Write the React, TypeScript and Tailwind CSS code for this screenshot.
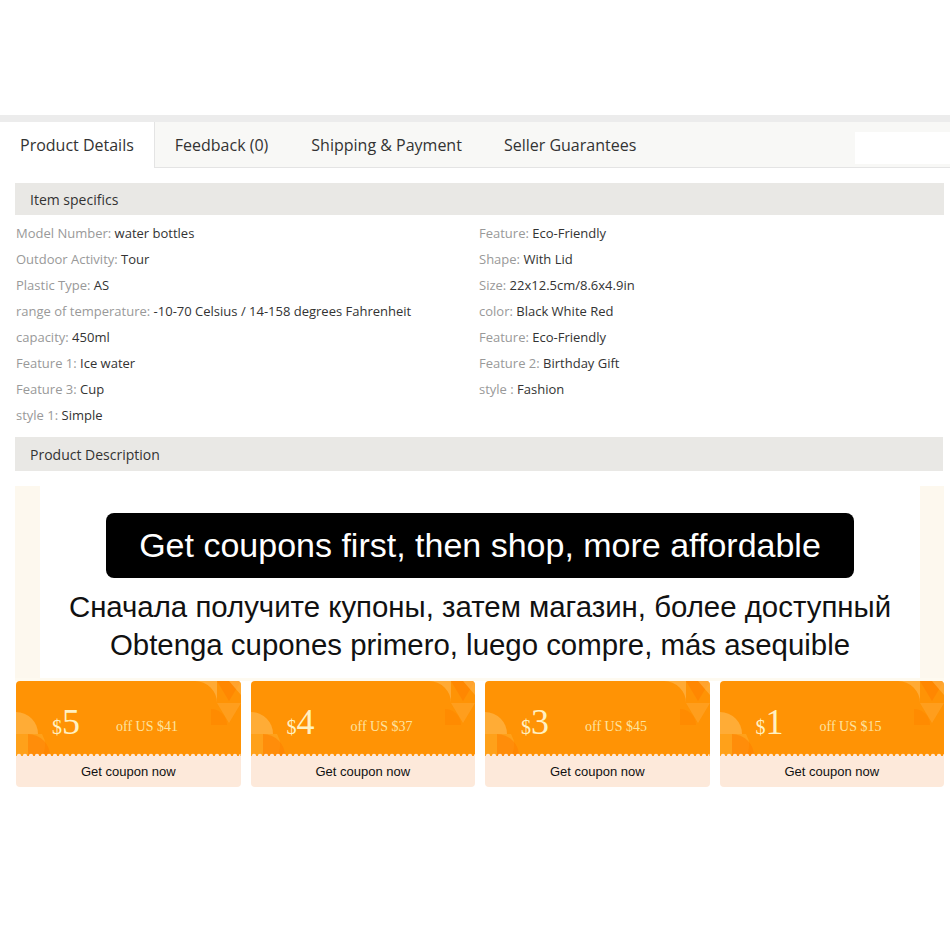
import React from "react";

const left: [string, string][] = [
  ["Model Number:", "water bottles"],
  ["Outdoor Activity:", "Tour"],
  ["Plastic Type:", "AS"],
  ["range of temperature:", "-10-70 Celsius / 14-158 degrees Fahrenheit"],
  ["capacity:", "450ml"],
  ["Feature 1:", "Ice water"],
  ["Feature 3:", "Cup"],
  ["style 1:", "Simple"],
];
const right: [string, string][] = [
  ["Feature:", "Eco-Friendly"],
  ["Shape:", "With Lid"],
  ["Size:", "22x12.5cm/8.6x4.9in"],
  ["color:", "Black White Red"],
  ["Feature:", "Eco-Friendly"],
  ["Feature 2:", "Birthday Gift"],
  ["style :", "Fashion"],
];

const coupons = [
  { v: "5", off: "$41" },
  { v: "4", off: "$37" },
  { v: "3", off: "$45" },
  { v: "1", off: "$15" },
];

function Row({ l, v }: { l: string; v: string }) {
  return (
    <div className="h-[26px] flex items-center whitespace-nowrap">
      <span className="text-[#999]">{l}</span>
      <span className="text-[#333]">&nbsp;{v}</span>
    </div>
  );
}

function Coupon({ v, off }: { v: string; off: string }) {
  return (
    <div className="flex-1 h-[106px] rounded-[4px] overflow-hidden flex flex-col">
      <div className="relative h-[75px] bg-[#ff9305] flex items-center">
        <svg className="absolute right-0 top-0" width="60" height="75" viewBox="0 0 60 75">
          <path d="M14 0 A22 22 0 0 1 36 22 L36 0 Z" fill="#ffb040" opacity="0.8" />
          <path d="M36 0 L60 0 L48 20 Z" fill="#ff8200" opacity="0.7" />
          <path d="M36 22 L60 22 L48 42 Z" fill="#ffa020" opacity="0.9" />
          <path d="M30 28 A16 16 0 0 1 46 44 L30 44 Z" fill="#ff8a00" opacity="0.8" />
          <path d="M48 0 L60 0 L60 14 Z" fill="#ffb54d" opacity="0.6" />
        </svg>
        <svg className="absolute left-0 bottom-0" width="40" height="44" viewBox="0 0 40 44">
          <path d="M0 0 A22 22 0 0 1 22 22 L0 22 Z" fill="#ffb040" opacity="0.85" />
          <path d="M0 22 L26 22 A22 22 0 0 1 26 44 L0 44 Z" fill="#ffa51f" opacity="0.8" />
          <path d="M12 22 A22 22 0 0 1 34 44 L12 44 Z" fill="#ff8000" opacity="0.6" />
        </svg>
        <div className="relative flex items-end text-[#fff1c2] font-['Liberation_Serif',serif] pl-[36px] pt-[6px]">
          <span className="text-[20px] leading-none mb-[3px]">$</span>
          <span className="text-[36px] leading-none">{v}</span>
        </div>
        <div className="relative ml-[36px] mt-[15px] text-[14px] text-[#fde3a0] font-['Liberation_Serif',serif]">
          off US {off}
        </div>
        <svg className="absolute left-0 bottom-[-3px]" width="100%" height="6">
          <defs>
            <pattern id={`sc${v}`} width="6" height="6" patternUnits="userSpaceOnUse">
              <circle cx="3" cy="3" r="2.2" fill="#fde9da" />
            </pattern>
          </defs>
          <rect width="100%" height="6" fill={`url(#sc${v})`} />
        </svg>
      </div>
      <div className="flex-1 bg-[#fde9da] flex items-center justify-center text-[13px] text-[#111] font-['Liberation_Sans',Arial,sans-serif]">
        Get coupon now
      </div>
    </div>
  );
}

export default function App() {
  return (
    <div className="w-[950px] h-[950px] bg-white font-['Open_Sans',sans-serif] overflow-hidden">
      <div className="h-[115px]" />
      <div className="h-[7px] bg-[#ececec]" />
      <div className="h-[46px] bg-[#f8f8f6] border-b border-[#e4e4e4] flex items-stretch text-[16px] text-[#333]">
        <div className="bg-white border-r border-[#e4e4e4] px-[20px] flex items-center mb-[-1px]">Product Details</div>
        <div className="px-[21px] flex items-center ml-[-1px]">Feedback (0)</div>
        <div className="px-[21px] flex items-center ml-[1px]">Shipping &amp; Payment</div>
        <div className="px-[21px] flex items-center">Seller Guarantees</div>
        <div className="flex-1" />
        <div className="w-[95px] bg-white my-[10px] mb-[3px]" />
      </div>
      <div className="px-[15px] pr-[6px] mt-[15px]">
        <div className="h-[32px] bg-[#e9e8e5] flex items-center pl-[15px] text-[14px] text-[#333]">Item specifics</div>
        <div className="flex text-[13px] mt-[6px] pl-[1px]">
          <div className="w-[463px]">
            {left.map(([l, v], i) => (
              <Row key={i} l={l} v={v} />
            ))}
          </div>
          <div className="flex-1">
            {right.map(([l, v], i) => (
              <Row key={i} l={l} v={v} />
            ))}
          </div>
        </div>
      </div>
      <div className="px-[15px] pr-[7px] mt-[8px]">
        <div className="h-[34px] bg-[#e9e8e5] flex items-center pl-[15px] text-[14px] text-[#333]">Product Description</div>
      </div>
      <div className="mx-[15px] mr-[6px] mt-[15px] font-['Liberation_Sans',Arial,sans-serif]">
        <div className="flex h-[192px]">
          <div className="w-[25px] bg-[#fdf8ee]" />
          <div className="flex-1 bg-white flex flex-col items-center">
            <div className="mt-[27px] w-[748px] h-[65px] bg-black rounded-[8px] flex items-center justify-center text-white text-[34px]">
              Get coupons first, then shop, more affordable
            </div>
            <div className="text-[29.4px] text-[#111] leading-[38px] mt-[10px] text-center whitespace-nowrap">
              <div>Сначала получите купоны, затем магазин, более доступный</div>
              <div>Obtenga cupones primero, luego compre, más asequible</div>
            </div>
          </div>
          <div className="w-[24px] bg-[#fdf8ee]" />
        </div>
        <div className="h-[3px] bg-[#fefaf0]" />
        <div className="flex gap-[10px] pl-[1px]">
          {coupons.map((c) => (
            <Coupon key={c.v} v={c.v} off={c.off} />
          ))}
        </div>
      </div>
    </div>
  );
}
